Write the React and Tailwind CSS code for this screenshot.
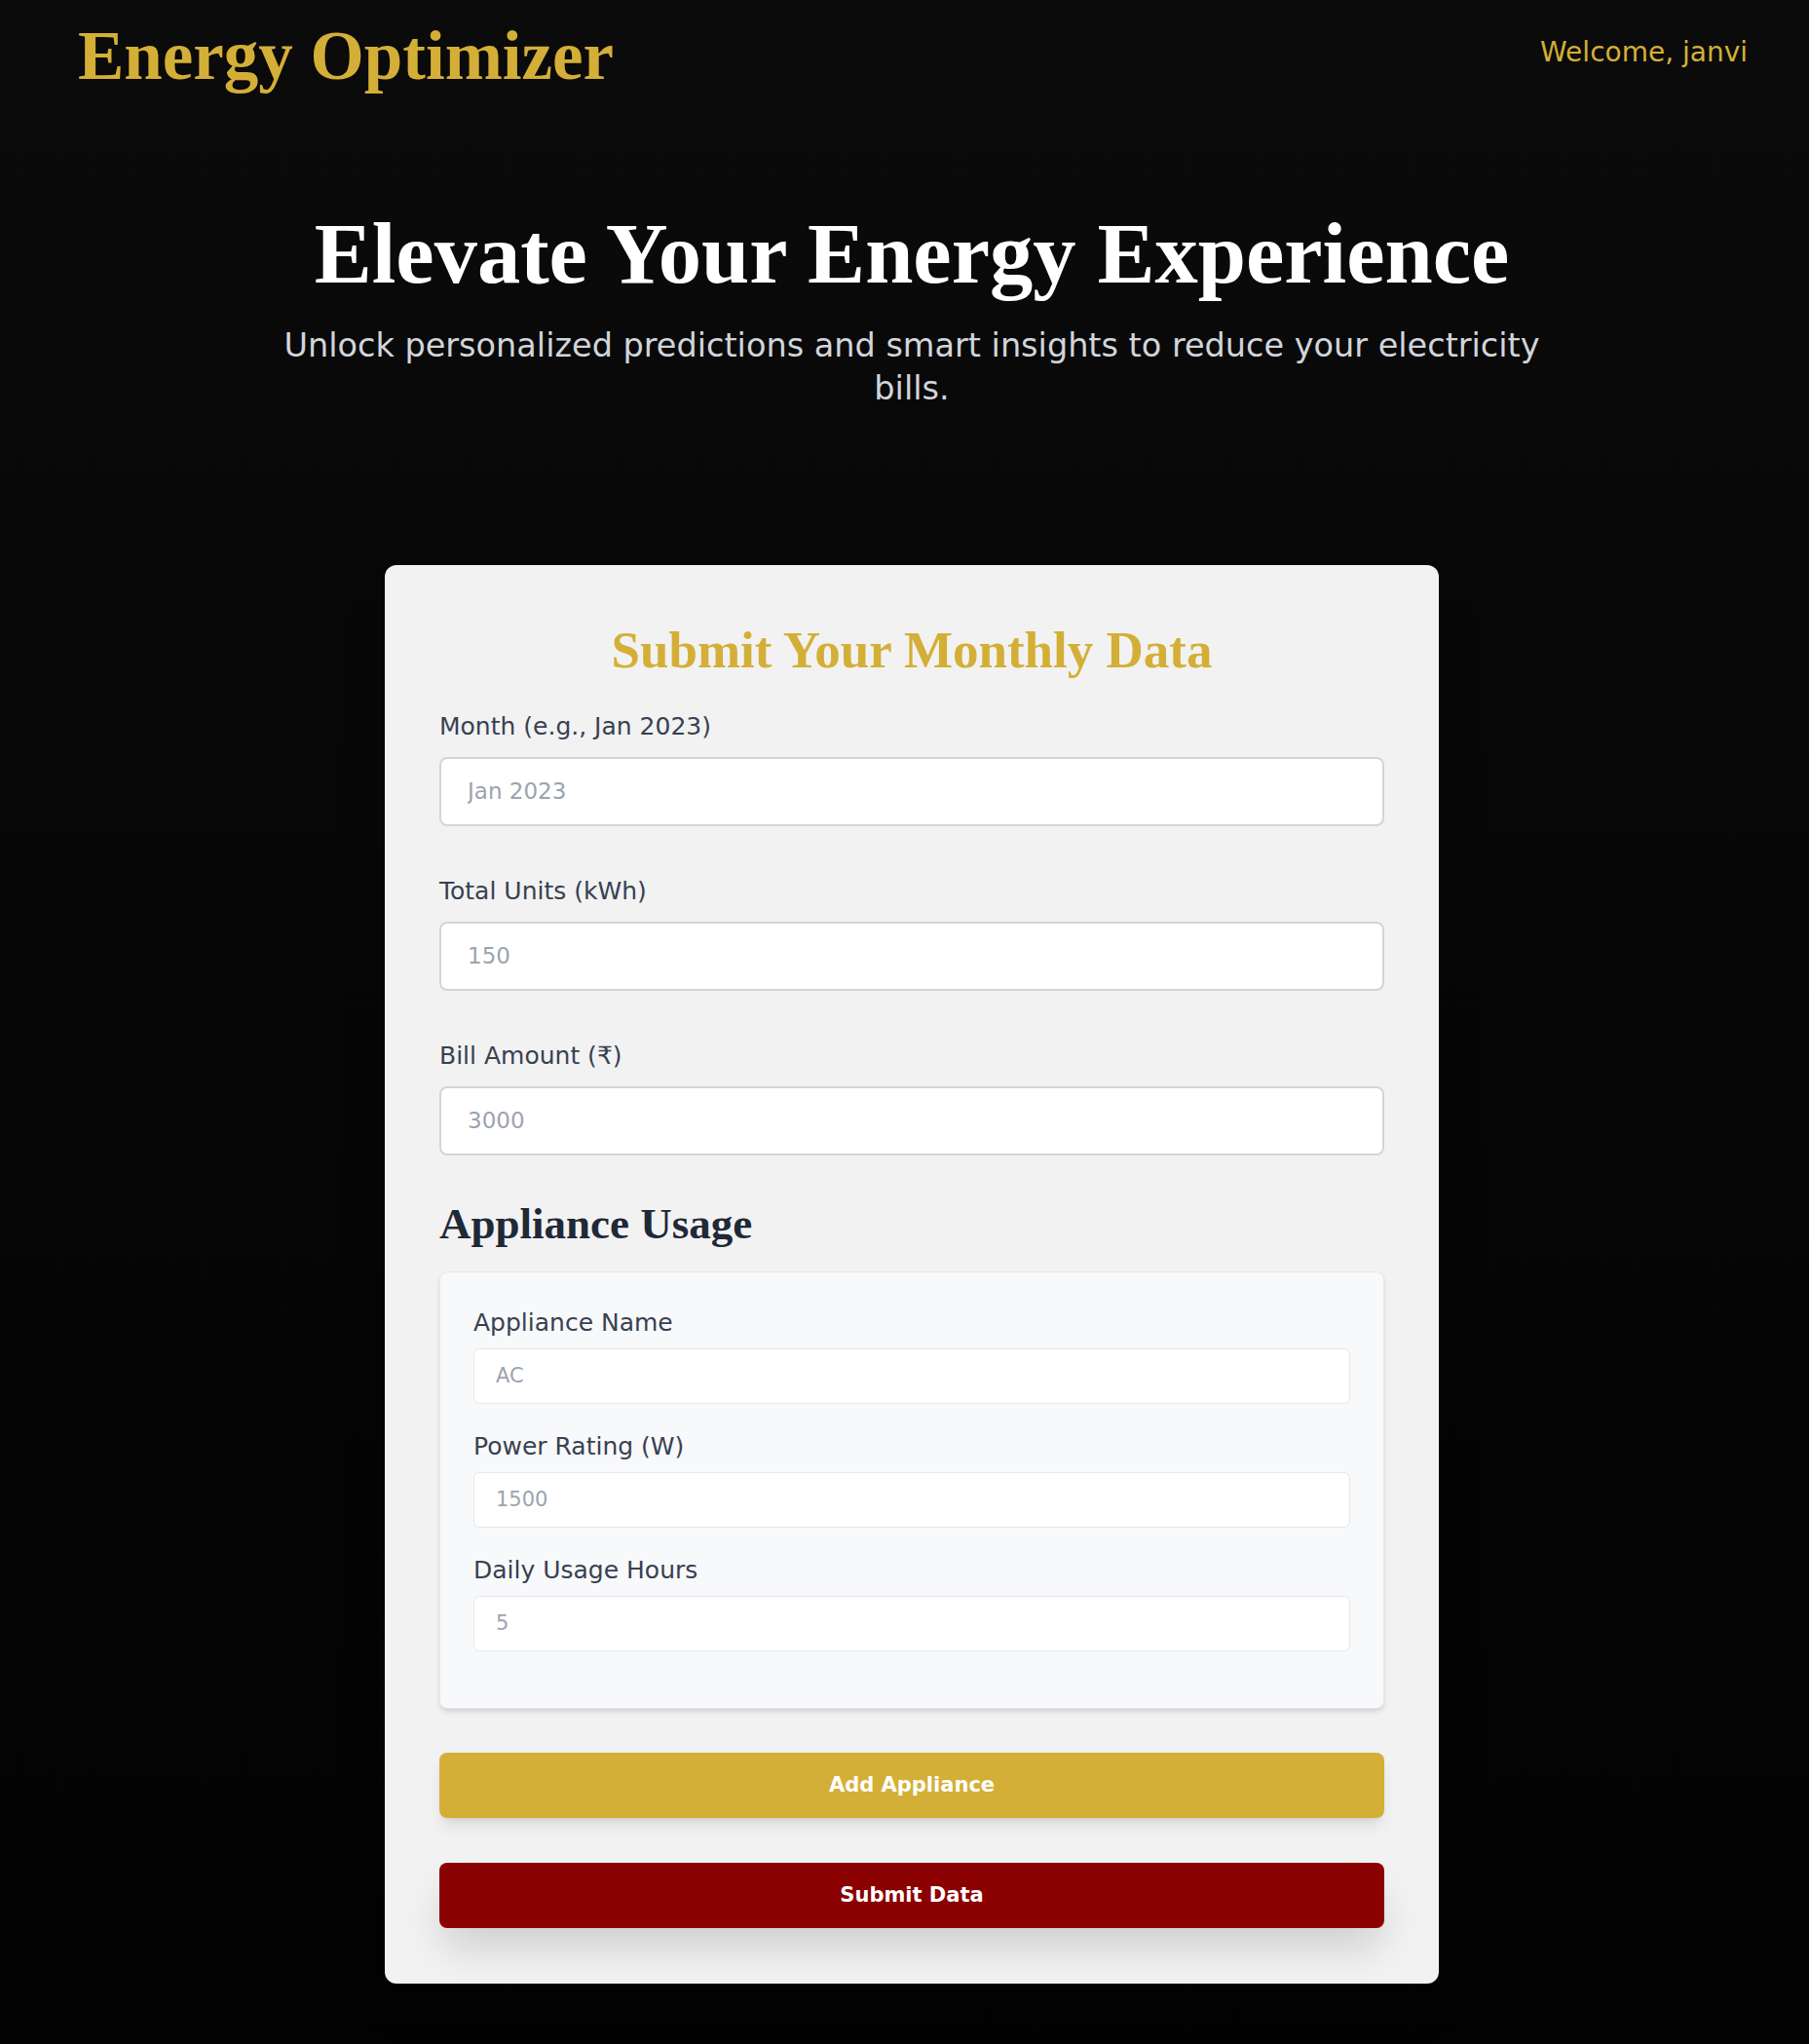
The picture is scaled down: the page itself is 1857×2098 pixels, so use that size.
import React from "react";

const serif = "font-['Liberation_Serif','Times_New_Roman',serif] font-bold";

function Field({ label, placeholder }) {
  return (
    <div className="mb-[49px]">
      <label className="block text-[25px] leading-[36px] text-[#374151] mb-[13px]">{label}</label>
      <input
        type="text"
        placeholder={placeholder}
        className="block w-full h-[71px] px-[27px] bg-white border-2 border-[#d1d5db] rounded-lg text-[23px] text-[#111827] placeholder:text-[#9ca3af] outline-none"
      />
    </div>
  );
}

function ApplianceField({ label, placeholder, last }) {
  return (
    <div className={last ? "mb-[25px]" : "mb-[26px]"}>
      <label className="block text-[25px] leading-[36px] text-[#374151] mb-[8px]">{label}</label>
      <input
        type="text"
        placeholder={placeholder}
        className="block w-full h-[57px] px-[22px] bg-white border border-[#e5e7eb] rounded-md text-[21px] text-[#111827] placeholder:text-[#9ca3af] outline-none"
      />
    </div>
  );
}

export default function App() {
  return (
    <div className="min-h-[2098px] bg-linear-to-b from-[#0b0b0b] to-[#030303] pl-[80px] pr-[65px] font-['DejaVu_Sans',sans-serif]">
      {/* top bar */}
      <header className="flex justify-between items-start pt-[22px]">
        <h1 className={`${serif} text-[71px] leading-none text-[#d4af37]`}>Energy Optimizer</h1>
        <span className="pt-[12px] -mr-[2px] text-[28px] leading-[40px] text-[#d4af37]">Welcome, janvi</span>
      </header>

      {/* hero */}
      <section className="text-center pt-[114px]">
        <h2 className={`${serif} text-[88.5px] leading-[1.2] text-white`}>Elevate Your Energy Experience</h2>
        <p className="mt-[20px] text-[33.5px] leading-[44px] text-[#d1d5db]">
          Unlock personalized predictions and smart insights to reduce your electricity
          <br />
          bills.
        </p>
      </section>

      {/* form card */}
      <div className="mx-auto mt-[159px] w-[1082px] bg-[#f2f2f2] rounded-xl px-[56px] pt-[56px] pb-[57px] shadow-2xl">
        <h3 className={`${serif} text-center text-[53px] leading-[1.2] text-[#d4af37] mb-[28px]`}>
          Submit Your Monthly Data
        </h3>

        <Field label="Month (e.g., Jan 2023)" placeholder="Jan 2023" />
        <Field label="Total Units (kWh)" placeholder="150" />
        <Field label="Bill Amount (₹)" placeholder="3000" />

        <h4 className={`${serif} text-[45px] leading-[48px] text-[#1f2937] -mt-[3px] mb-[25px]`}>Appliance Usage</h4>

        <div className="bg-[#f8f9fa] border border-[#e5e7eb] rounded-lg shadow-md p-[34px] pb-[33px]">
          <ApplianceField label="Appliance Name" placeholder="AC" />
          <ApplianceField label="Power Rating (W)" placeholder="1500" />
          <ApplianceField label="Daily Usage Hours" placeholder="5" last />
        </div>

        <button className="mt-[45px] w-full h-[67px] rounded-lg bg-[#d4af37] text-white text-[21px] font-bold shadow-lg">
          Add Appliance
        </button>
        <button className="mt-[46px] w-full h-[67px] rounded-lg bg-[#8b0000] text-white text-[21px] font-bold shadow-[0_25px_40px_-5px_rgba(0,0,0,0.15)]">
          Submit Data
        </button>
      </div>
    </div>
  );
}
